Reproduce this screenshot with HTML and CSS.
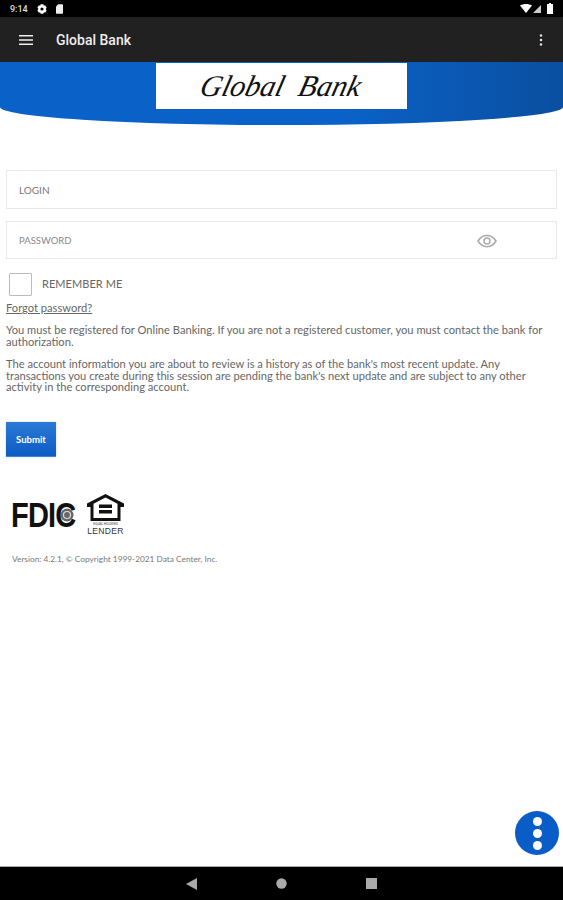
FILE: index.html
```html
<!DOCTYPE html>
<html lang="en">
<head>
  <meta charset="UTF-8">
  <meta name="viewport" content="width=device-width, initial-scale=1.0">
  <title>Global Bank</title>
  <link rel="stylesheet" href="styles.css">
</head>
<body>
  <div class="screen">
    <div class="status-bar">
      <div class="status-left">
        <span class="clock">9:14</span>
        <svg width="10" height="10" viewBox="0 0 10 10"><path fill="#fff" fill-rule="evenodd" d="M3.7.3h2.6l.5 1.3 1.5-.2L9.6 3.6 8.700 5l.9 1.4-1.300 2.200-1.500-.2-.5 1.300H3.700l-.5-1.300-1.500.2L.4 6.400 1.300 5 .4 3.600l1.300-2.200 1.500.2zM5 3.400a1.600 1.600 0 1 0 0 3.200 1.600 1.600 0 0 0 0-3.200z"/></svg>
        <svg width="7" height="10" viewBox="0 0 8 11"><path fill="#eee" d="M2.500 0H7a1 1 0 0 1 1 1v9a1 1 0 0 1-1 1H1a1 1 0 0 1-1-1V2.500z"/></svg>
      </div>
      <div class="status-right">
        <svg width="12" height="9" viewBox="0 0 12 9"><path fill="#fff" d="M0 1.500C3.500-.5 8.500-.5 12 1.500L6 9z"/></svg>
        <svg width="8" height="8" viewBox="0 0 8 8"><path fill="#ccc" d="M8 0v8H0z"/></svg>
        <svg class="battery" width="6" height="11" viewBox="0 0 6 11"><path fill="#fff" d="M2 0h2v1h1.500a.5.5 0 0 1 .5.500V11H0V1.500A.5.5 0 0 1 .5 1H2z"/></svg>
      </div>
    </div>

    <header class="app-bar">
      <svg class="menu-icon" width="14" height="10" viewBox="0 0 14 10"><path fill="#eee" d="M0 0h14v1.500H0zM0 4.200h14v1.500H0zM0 8.500h14V10H0z"/></svg>
      <span class="app-title">Global Bank</span>
      <svg class="more-icon" width="4" height="12" viewBox="0 0 4 12"><circle cx="2" cy="1.500" r="1.300" fill="#ddd"/><circle cx="2" cy="6" r="1.300" fill="#ddd"/><circle cx="2" cy="10.500" r="1.300" fill="#ddd"/></svg>
    </header>

    <main class="content">
      <div class="banner">
        <div class="logo"><span class="logo-text">Global &nbsp;Bank</span></div>
      </div>

      <form class="login-form">
        <div class="field">LOGIN</div>
        <div class="field field-password">
          PASSWORD
          <svg class="eye" width="20" height="14" viewBox="0 0 20 14"><path fill="none" stroke="#aaa" stroke-width="1.500" d="M1 7c4.500-7.500 13.500-7.500 18 0-4.500 7.500-13.500 7.500-18 0z"/><circle cx="10" cy="7" r="3" fill="none" stroke="#aaa" stroke-width="1.500"/></svg>
        </div>
        <label class="remember"><span class="checkbox"></span><span class="remember-text">REMEMBER ME</span></label>
        <a class="forgot" href="#">Forgot password?</a>
        <p class="notice">You must be registered for Online Banking. If you are not a registered customer, you must contact the bank for authorization.</p>
        <p class="notice">The account information you are about to review is a history as of the bank's most recent update. Any transactions you create during this session are pending the bank's next update and are subject to any other activity in the corresponding account.</p>
        <button class="submit" type="button">Submit</button>
      </form>

      <div class="badges">
        <div class="fdic">
          <span class="fdic-text">FDIC</span>
          <svg class="seal" width="14" height="14" viewBox="0 0 14 14"><circle cx="7" cy="7" r="6.500" fill="#666"/><circle cx="7" cy="7" r="3.500" fill="none" stroke="#ddd" stroke-width="1.200"/></svg>
        </div>
        <div class="ehl">
          <svg width="37" height="27" viewBox="0 0 37 27"><path fill="#111" fill-rule="evenodd" d="M18.500 0 37 9.500V13h-3.500v14h-30V13H0V9.500zM18.500 3.500 6.500 9.800V24h24V9.800z"/><path fill="#111" d="M12 10.500h13V14H12zM12 16h13v3.500H12z"/></svg>
          <span class="ehl-small">EQUAL HOUSING</span>
          <span class="ehl-big">LENDER</span>
        </div>
      </div>

      <p class="version">Version: 4.2.1, © Copyright 1999-2021 Data Center, Inc.</p>
    </main>

    <button class="fab" type="button"><span></span><span></span><span></span></button>

    <nav class="nav-bar">
      <svg width="11" height="12" viewBox="0 0 11 12"><path fill="#aaa" d="M11 0v12L0 6z"/></svg>
      <svg width="11" height="11" viewBox="0 0 11 11"><circle cx="5.500" cy="5.500" r="5.200" fill="#aaa"/></svg>
      <svg width="11" height="11" viewBox="0 0 11 11"><path fill="#aaa" d="M0 0h11v11H0z"/></svg>
    </nav>
  </div>
</body>
</html>
```

FILE: styles.css
```css
* { box-sizing: border-box; }

body {
  margin: 0;
  font-family: Lato, "Open Sans", sans-serif;
  background-color: #fff;
  color: #555;
}

.screen {
  position: relative;
  display: flex;
  flex-direction: column;
  height: 900px;
  overflow: hidden;
}

/* system bars */
.status-bar {
  display: flex;
  justify-content: space-between;
  align-items: center;
  height: 17px;
  padding: 0 10px;
  background-color: #000;
}
.status-left, .status-right { display: flex; align-items: center; }
.status-left { gap: 9px; }
.status-right { gap: 1px; }
.battery { margin-left: 5px; }
.clock {
  font-family: Roboto, sans-serif;
  font-size: 9px;
  font-weight: 500;
  color: #ddd;
}

.app-bar {
  display: flex;
  align-items: center;
  height: 45px;
  padding: 0 19px;
  background-color: #212121;
}
.menu-icon { flex: none; }
.app-title {
  margin-left: 23px;
  font-family: Roboto, sans-serif;
  font-size: 14px;
  font-weight: 500;
  color: #eee;
}
.more-icon { margin-left: auto; margin-right: 1px; }

.content { flex: 1; }

.banner {
  display: flex;
  justify-content: center;
  height: 63px;
  background: linear-gradient(90deg, #0a62c9 0%, #0a62c9 60%, #0a4fa0 100%);
  border-radius: 0 0 50% 50% / 0 0 18px 18px;
}
.logo {
  display: flex;
  justify-content: center;
  align-items: center;
  width: 251px;
  height: 46px;
  margin-top: 1px;
  margin-right: 1px;
  background-color: #fff;
}
.logo-text {
  font-family: "Liberation Serif", serif;
  font-style: italic;
  font-size: 30px;
  line-height: 1;
  color: #111;
  transform: skewX(-14deg);
}

.login-form {
  display: flex;
  flex-direction: column;
  align-items: flex-start;
  padding: 45px 6px 0;
}
.field {
  display: flex;
  align-items: center;
  width: 100%;
  height: 39px;
  padding-left: 12px;
  border: 1px solid #e8e8e8;
  font-size: 10px;
  color: #777;
}
.field-password {
  position: relative;
  height: 38px;
  margin-top: 12px;
  font-size: 9.500px;
  color: #888;
}
.eye { position: absolute; left: 470px; top: 12px; }

.remember {
  display: flex;
  align-items: center;
  margin: 14px 0 0 3px;
  font-size: 11px;
  color: #666;
}
.remember-text { padding-bottom: 2px; letter-spacing: 0.050px; }
.checkbox {
  width: 23px;
  height: 23px;
  margin-right: 10px;
  border: 1px solid #bbb;
  border-radius: 1px;
}
.forgot {
  margin-top: 5px;
  font-size: 11.150px;
  line-height: 13px;
  color: #666;
}
.notice {
  margin: 10px 0 0;
  font-size: 11.150px;
  line-height: 11.500px;
  color: #666;
}
.notice + .notice { margin-top: 11px; }

.submit {
  width: 50px;
  height: 35px;
  margin-top: 29px;
  padding: 1px 0 0;
  border: none;
  border-bottom: 1px solid #3d86d8;
  background: linear-gradient(180deg, #2b7ad6 0%, #0c5cc4 100%);
  box-shadow: 0 0 2px rgba(0, 0, 0, 0.2);
  font-family: Lato, sans-serif;
  font-size: 9.500px;
  font-weight: 700;
  color: #fff;
}

.badges {
  display: flex;
  align-items: flex-start;
  gap: 12px;
  margin: 37px 0 0 12px;
}
.fdic {
  position: relative;
  width: 63px;
  margin-top: 3px;
  font-family: "Liberation Sans", sans-serif;
  font-size: 35px;
  font-weight: 700;
  line-height: 36px;
  letter-spacing: -1px;
  color: #111;
}
.fdic-text {
  display: block;
  margin-left: -1px;
  transform: scaleX(0.83);
  transform-origin: left center;
}
.seal { position: absolute; right: 1px; top: 11px; }
.ehl {
  display: flex;
  flex-direction: column;
  align-items: center;
  width: 37px;
  color: #333;
}
.ehl-small { margin-top: 1px; font-size: 3px; line-height: 5px; white-space: nowrap; }
.ehl-big {
  font-family: "Liberation Sans", sans-serif;
  font-size: 8.500px;
  line-height: 8px;
  letter-spacing: 0.300px;
}

.version {
  margin: 18px 0 0 12px;
  font-size: 8.300px;
  line-height: 12px;
  color: #777;
}

.fab {
  position: absolute;
  left: 515px;
  top: 811px;
  display: flex;
  flex-direction: column;
  align-items: center;
  justify-content: center;
  gap: 3px;
  width: 44px;
  height: 44px;
  padding: 0;
  border: none;
  border-radius: 50%;
  background-color: #0a5cc7;
}
.fab span {
  width: 9px;
  height: 9px;
  border-radius: 50%;
  background-color: #fff;
}

.nav-bar {
  display: flex;
  justify-content: center;
  align-items: center;
  gap: 79px;
  flex: none;
  height: 34px;
  border-top: 1px solid #aaa;
  background-color: #000;
}
```
